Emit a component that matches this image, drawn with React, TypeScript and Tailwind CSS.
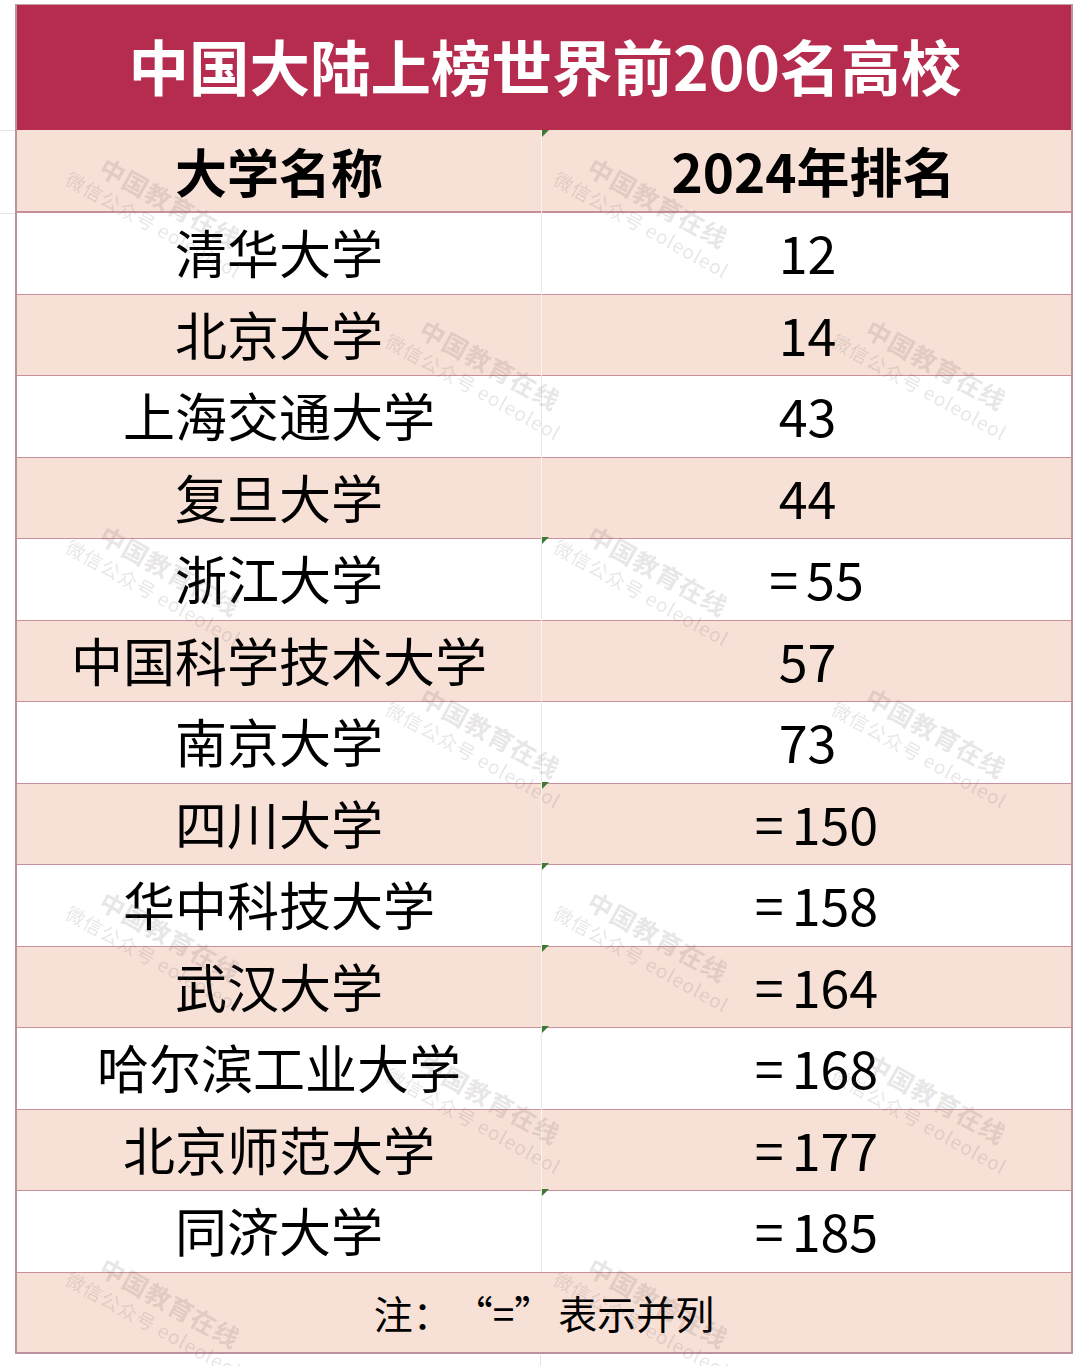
const rows = [
  { name: "清华大学", rank: "12", mark: false },
  { name: "北京大学", rank: "14", mark: false },
  { name: "上海交通大学", rank: "43", mark: false },
  { name: "复旦大学", rank: "44", mark: false },
  { name: "浙江大学", rank: "=55", mark: true },
  { name: "中国科学技术大学", rank: "57", mark: false },
  { name: "南京大学", rank: "73", mark: false },
  { name: "四川大学", rank: "=150", mark: true },
  { name: "华中科技大学", rank: "=158", mark: true },
  { name: "武汉大学", rank: "=164", mark: true },
  { name: "哈尔滨工业大学", rank: "=168", mark: true },
  { name: "北京师范大学", rank: "=177", mark: false },
  { name: "同济大学", rank: "=185", mark: true },
];

// watermark anchor points (top-left of the first line)
const marks = [
  [110, 150], [598, 150],
  [430, 312], [876, 312],
  [110, 518], [598, 518],
  [430, 680], [876, 680],
  [110, 884], [598, 884],
  [430, 1046], [876, 1046],
  [110, 1250], [598, 1250],
];

function GreenTick() {
  return (
    <div className="absolute left-0 top-0 w-0 h-0 border-t-[7px] border-r-[7px] border-t-[#3d7a35] border-r-transparent" />
  );
}

function Watermark({ x, y }: { x: number; y: number }) {
  return (
    <div
      className="absolute origin-top-left rotate-[29deg] text-[rgba(110,95,95,0.17)] whitespace-nowrap"
      style={{ left: x, top: y }}
    >
      <div className="text-[25px] font-bold leading-[32px] tracking-[1px]">中国教育在线</div>
      <div className="text-[19px] leading-[24px] -ml-[24px] tracking-[1px]">微信公众号 eoleoleol</div>
    </div>
  );
}

export default function App() {
  return (
    <div
      className="relative w-[1080px] h-[1366px] bg-white overflow-hidden text-black"
      style={{ fontFamily: '"Noto Sans CJK SC", "Noto Sans", sans-serif' }}
    >
      {/* faint spreadsheet gridlines outside the table */}
      <div className="absolute left-0 top-[130px] w-[15px] border-t border-[#e4e4e4]" />
      <div className="absolute left-0 top-[213px] w-[15px] border-t border-[#e4e4e4]" />
      <div className="absolute left-[540px] top-[1355px] h-[11px] border-l border-[#e4e4e4]" />

      <div className="ml-[15px] mt-[4px] w-[1058px] border-x-2 border-[#bc939d]">
        <div className="h-[126px] bg-[#b52c4e] flex items-center justify-center border-t border-[#c9a0a8]">
          <span className="text-white font-bold text-[60.5px] leading-none pl-[2px] -mt-[4px]">中国大陆上榜世界前200名高校</span>
        </div>

        <div className="grid grid-cols-[524px_1fr] h-[83px] bg-[#f7e0d6] border-b-2 border-[#c68f9b]">
          <div className="flex items-center justify-center font-bold text-[52px] leading-none">大学名称</div>
          <div className="relative flex items-center justify-center font-bold text-[53px] leading-none border-l border-[#fbf3f0] pl-[14px]">
            <GreenTick />
            2024年排名
          </div>
        </div>

        {rows.map((r, i) => (
          <div
            key={r.name}
            className={`grid grid-cols-[524px_1fr] h-[81.5px] border-b border-[#c8919c] ${
              i % 2 === 1 ? "bg-[#f7e0d6]" : "bg-white"
            }`}
          >
            <div className="flex items-center justify-center text-[52px] leading-none -mt-[2px]">{r.name}</div>
            <div
              className={`relative flex items-center justify-center text-[52px] leading-none border-l -mt-[2px] ${
                r.rank.startsWith("=") ? "pl-[20px]" : "pl-[2px]"
              } ${i % 2 === 1 ? "border-[#fbf3f0]" : "border-[#efe8e8]"}`}
            >
              {r.mark && <GreenTick />}
              {r.rank.startsWith("=") ? (
                <>
                  <span className="mr-[8px]">=</span>
                  {r.rank.slice(1)}
                </>
              ) : (
                r.rank
              )}
            </div>
          </div>
        ))}

        <div className="h-[81px] bg-[#f7e0d6] flex items-center justify-center border-b-2 border-[#bc939d]">
          <span className="text-[39px] leading-none">注：</span>
          <span className="text-[39px] leading-none ml-[2px]">“=”</span>
          <span className="text-[39px] leading-none ml-[5px]">表示并列</span>
        </div>
      </div>

      <div className="absolute inset-0 pointer-events-none">
        {marks.map(([x, y]) => (
          <Watermark key={`${x}-${y}`} x={x} y={y} />
        ))}
      </div>
    </div>
  );
}
